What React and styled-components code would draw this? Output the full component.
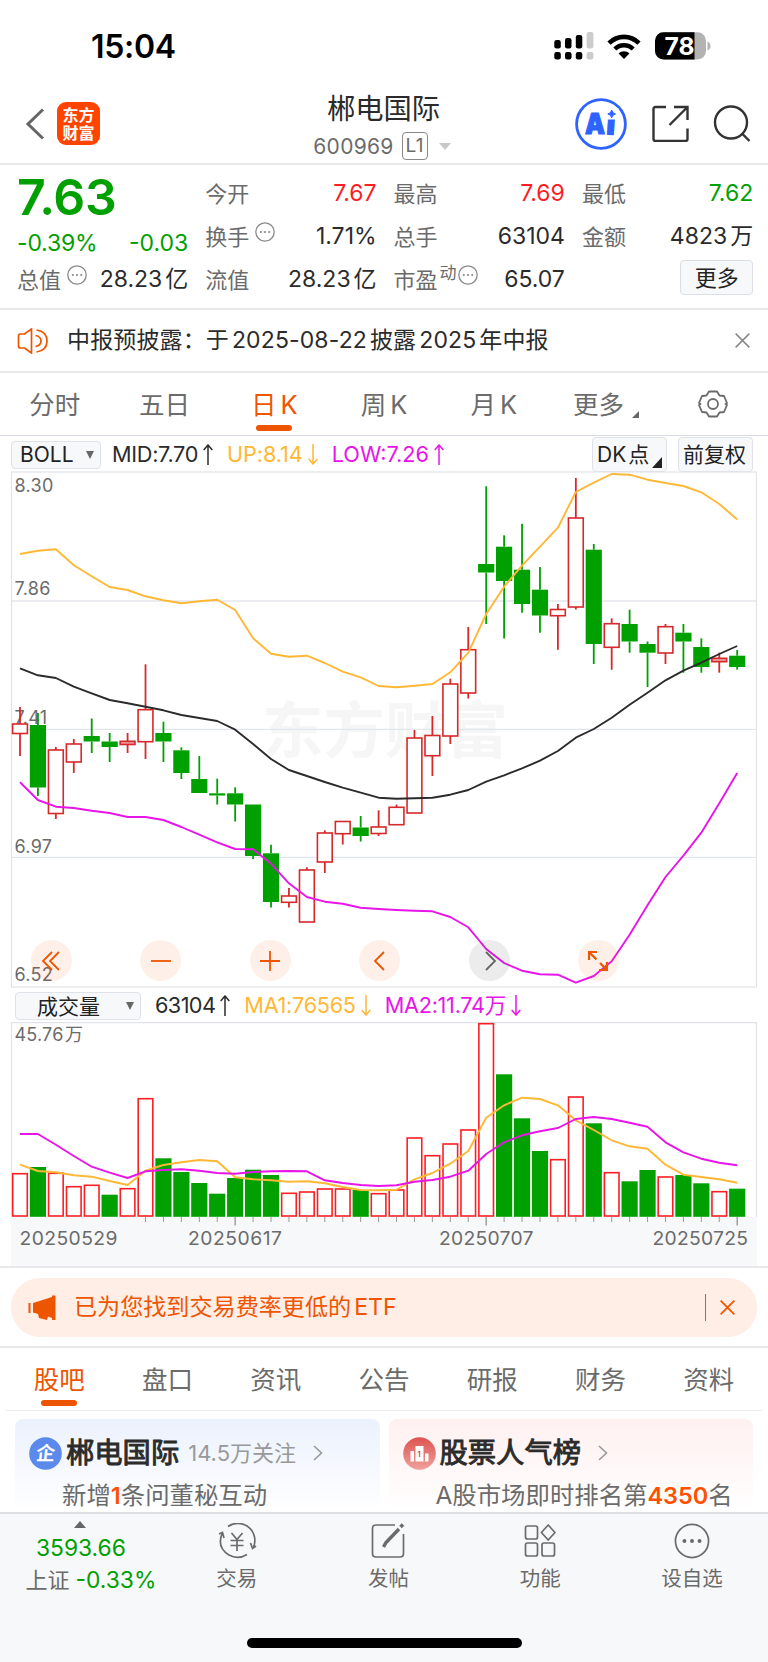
import styled, { createGlobalStyle } from "styled-components";

const GREEN = "#00a000";
const RED = "#fb1f24";
const CANDLE_RED = "#d6292b";
const ORANGE = "#ee5500";
const YELLOW = "#ffb836";
const PINK = "#e815e8";

const GlobalStyle = createGlobalStyle`
    * {
        box-sizing: border-box;
    }

    body {
        margin: 0;
        background: #fff;
        color: #2b2b2b;
        font-family: Inter, "Noto Sans CJK SC", sans-serif;
        line-height: 1;
        white-space: nowrap;
    }

    svg {
        display: block;
        flex: none;
    }
`

const Page = styled.div`
    width: 768px;
    height: 1662px;
    overflow: hidden;
    display: flex;
    flex-direction: column;
`

const StatusBar = styled.div`
    height: 93px;
    padding: 0 57.5px 0 91px;
    display: flex;
    align-items: center;
    justify-content: space-between;
`

const Clock = styled.span`
    font-size: 32px;
    font-weight: 600;
    letter-spacing: -0.3px;
    color: #000;
    margin-top: 1px;
`

const StatusIcons = styled.div`
    display: flex;
    align-items: center;
    gap: 13.5px;
    margin-top: -1px;
`

const Header = styled.header`
    height: 72px;
    padding: 0 17px 0 25px;
    display: grid;
    grid-template-columns: 1fr auto 1fr;
    align-items: center;
    border-bottom: 2px solid #e9e9ec;
`

const HeaderSide = styled.div`
    display: flex;
    align-items: center;
    justify-content: ${props => props.$end ? "flex-end" : "flex-start"};
    gap: ${props => props.$gap}px;
    padding-bottom: 9px;
`

const Logo = styled.div`
    width: 43px;
    height: 43px;
    border-radius: 9px;
    background: #ff4400;
    color: #fff;
    display: flex;
    flex-direction: column;
    align-items: center;
    justify-content: center;
    font-size: 16px;
    font-weight: 700;
    line-height: 18px;
`

const Title = styled.div`
    display: flex;
    flex-direction: column;
    align-items: center;
    align-self: start;
    gap: 5px;
    margin-right: 9px;
`

const StockName = styled.div`
    font-size: 28.3px;
    line-height: 32px;
`

const StockCode = styled.div`
    display: flex;
    align-items: center;
    font-size: 21px;
    letter-spacing: 0.3px;
    color: #6b6b6b;
    height: 32px;
    margin-right: 3px;
`

const Level = styled.span`
    width: 26px;
    height: 28px;
    margin: 0 11px 0 8px;
    border: 1.5px solid #888;
    border-radius: 4px;
    font-size: 19px;
    line-height: 26px;
    text-align: center;
`

const Caret = styled.i`
    width: 0;
    height: 0;
    border: ${props => props.$size}px solid transparent;
    border-top: ${props => props.$tall}px solid ${props => props.$color};
    border-bottom: 0;
`

const Quote = styled.section`
    height: 145px;
    padding: 7px 14px 0 17px;
    display: grid;
    grid-template-columns: repeat(4, 171.3px);
    column-gap: 17px;
    border-bottom: 2px solid #e9e9ec;
`

const QuoteColumn = styled.div`
    display: flex;
    flex-direction: column;
`

const QuoteRow = styled.div`
    height: ${props => props.$height || 43}px;
    display: flex;
    align-items: center;
    justify-content: ${props => props.$end ? "flex-end" : "space-between"};
    font-size: 23px;
`

const Price = styled.div`
    height: 49px;
    font-size: 50px;
    font-weight: 600;
    letter-spacing: -0.4px;
    line-height: 50px;
    color: ${GREEN};
`

const Label = styled.span`
    display: flex;
    align-items: center;
    font-size: 22px;
    color: #6b6b6b;

    sup {
        font-size: 17px;
        line-height: 17px;
        margin: -12px 0 0 2px;
    }

    svg {
        margin: -9px 0 0 ${props => props.$tight ? 1 : 6}px;
    }
`

const Value = styled.span`
    letter-spacing: ${props => props.$ls || 0}px;
    color: ${props => props.$color || "#2b2b2b"};
`

// small gap between latin digits and the han character next to them
const Gap = styled.span`
    margin-left: ${props => props.$size || 3}px;
`

const MoreButton = styled.button`
    width: 73px;
    height: 35px;
    padding: 0;
    border: 1.5px solid #dcdee6;
    border-radius: 4px;
    background: #f7f8fa;
    font: 22px/30px Inter, "Noto Sans CJK SC", sans-serif;
    color: #222;
    margin-top: -4px;
`

const Notice = styled.div`
    height: 63px;
    padding: 0 18px 0 17px;
    display: flex;
    align-items: center;
    border-bottom: 2px solid #e9e9ec;
    font-size: 23px;
`

const NoticeText = styled.span`
    flex: 1;
    margin-left: 18px;
    letter-spacing: 0.13px;
`

const Tabs = styled.nav`
    height: 63px;
    margin: ${props => props.$inset ? "0 5px" : 0};
    display: grid;
    grid-template-columns: repeat(7, 1fr);
    border-bottom: 1.5px solid ${props => props.$inset ? "#ececef" : "#d9dbe2"};
`

const Tab = styled.a`
    display: flex;
    flex-direction: column;
    align-items: center;
    font-size: 25.5px;
    line-height: 63px;
    color: ${props => props.$active ? ORANGE : "#6b6b6b"};

    &::after {
        content: "";
        display: ${props => props.$active ? "block" : "none"};
        width: 36px;
        height: 6px;
        border-radius: 3px;
        background: ${ORANGE};
        margin-top: -11px;
    }
`

const TabMore = styled.span`
    display: flex;
    align-items: center;
    gap: 8px;
    padding-left: 5px;

    i {
        margin-top: 19px;
    }
`

const Corner = styled.i`
    width: 0;
    height: 0;
    border-left: ${props => props.$size}px solid transparent;
    border-bottom: ${props => props.$size * 1.1}px solid ${props => props.$color};
`

const IndicatorBar = styled.div`
    height: ${props => props.$height}px;
    padding: 2px 15px 0 ${props => props.$left}px;
    display: flex;
    align-items: center;
    font-size: 21.7px;
`

const Selector = styled.div`
    width: ${props => props.$width}px;
    height: 28px;
    padding: 0 6px 0 ${props => props.$pad}px;
    margin-right: ${props => props.$gap}px;
    display: flex;
    align-items: center;
    justify-content: space-between;
    border: 1.5px solid #e0e2e9;
    border-radius: 4px;
    background: #f7f8fa;
    font-size: 21px;
    color: #222;
`

const Reading = styled.span`
    display: flex;
    align-items: center;
    gap: 5px;
    margin-right: 14px;
    letter-spacing: ${props => props.$ls || 0}px;
    color: ${props => props.$color};
`

const ToolBox = styled.div`
    position: relative;
    width: 75px;
    height: 35px;
    margin: -1px 0 0 ${props => props.$push ? "auto" : "11px"};
    border: 1.5px solid #e0e2e9;
    border-radius: 4px;
    background: #f7f8fa;
    color: #222;
    line-height: 34px;
    font-size: 21px;
    padding-left: 4px;

    i {
        position: absolute;
        right: 4px;
        bottom: 3px;
    }
`

const ChartPanel = styled.div`
    position: relative;
    height: ${props => props.$height}px;
`

const Controls = styled.div`
    position: absolute;
    left: 31px;
    top: 469px;
    display: flex;
    gap: 68.4px;
`

const Round = styled.button`
    width: 41px;
    height: 41px;
    border: 0;
    padding: 0;
    border-radius: 50%;
    display: grid;
    place-items: center;
    background: ${props => props.$grey ? "rgba(40, 40, 40, 0.09)" : "rgba(240, 90, 10, 0.09)"};
    color: ${props => props.$grey ? "#666" : ORANGE};
`

const BannerWrap = styled.div`
    height: 82px;
    padding: 10px 11px 0;
    border-top: 2px solid #e9e9ec;
    border-bottom: 2px solid #e9e9ec;
`

const Banner = styled.div`
    height: 59px;
    padding: 0 22px 0 17px;
    border-radius: 29px;
    background: #feeee6;
    color: ${ORANGE};
    display: flex;
    align-items: center;
    font-size: 23.1px;
`

const BannerText = styled.span`
    flex: 1;
    margin-left: 17px;
`

const BannerDivider = styled.i`
    width: 1.5px;
    height: 27px;
    margin-right: 14px;
    background: ${ORANGE};
`

const Cards = styled.div`
    height: 101px;
    padding: 8px 15px 0;
    display: grid;
    grid-template-columns: 1fr 1fr;
    gap: 9px;
`

const Card = styled.div`
    border-radius: 8px;
    padding: 17px 0 0 14px;
    background: linear-gradient(${props => props.$tint}, #fff);
`

const CardTitle = styled.div`
    height: 34px;
    display: flex;
    align-items: center;

    small {
        font-size: 22px;
        color: #999;
        margin-right: 17px;
    }
`

const CardName = styled.b`
    font-size: 28.3px;
    font-weight: 400;
    -webkit-text-stroke: 0.9px #2b2b2b;
    margin: 0 ${props => props.$after}px 0 4px;
`

const CardText = styled.div`
    margin: 13px 0 0 33px;
    font-size: 24.4px;
    color: #6b6b6b;

    em {
        font-style: normal;
        font-weight: 600;
        font-size: 23.5px;
        color: #ff5000;
    }
`

const BottomBar = styled.footer`
    height: 150px;
    padding-left: 9px;
    border-top: 2px solid #dedfe3;
    background: #f7f8fa;
    display: grid;
    grid-template-columns: repeat(5, 1fr);
    grid-template-rows: 124px auto;
`

const IndexCell = styled.div`
    display: flex;
    flex-direction: column;
    align-items: center;
    padding-top: 7px;
    color: ${GREEN};
    font-size: 22.8px;
`

const IndexRow = styled.div`
    display: flex;
    align-items: center;
    gap: 6px;
    height: 31.5px;
    margin-right: ${props => props.$shift}px;
`

const UpCaret = styled.i`
    border: 6px solid transparent;
    border-top: 0;
    border-bottom: 7px solid #666;
    margin: 0 9px 5px 0;
`

const NavItem = styled.a`
    display: flex;
    flex-direction: column;
    align-items: center;
    padding-top: 9px;
    gap: 7.5px;
    font-size: 20.5px;
    line-height: 24px;
    color: #6b6b6b;
`

const HomeIndicator = styled.div`
    grid-column: 1 / -1;
    justify-self: center;
    width: 275px;
    height: 10px;
    margin-left: -9px;
    border-radius: 5px;
    background: #000;
`

// day: [up, high, body top, body bottom, low, volume top, volume colour flipped]
const days = [
    [1, 707, 724, 733.5, 756, 1173.7], [0, 713, 725, 787.5, 796, 1167], [1, 747, 750, 813.5, 819, 1173.3],
    [1, 739, 744, 762, 773, 1186.7], [0, 718.5, 736, 741.5, 753, 1185.3, 1], [0, 733, 741.5, 747, 762, 1194.7],
    [1, 733, 741.3, 744.5, 753, 1188.7], [1, 664.3, 709.7, 741.7, 759, 1098.7], [0, 721.7, 733, 741.5, 762, 1158.3],
    [0, 747.3, 750.3, 773, 779, 1172], [0, 756, 779, 793, 793, 1183], [0, 778.7, 793.3, 795.5, 804.5, 1193.7],
    [0, 787.3, 793.3, 804.5, 821.5, 1178], [0, 804.5, 804.5, 856, 859, 1169.7], [0, 844.7, 853.3, 902, 907.5, 1175],
    [1, 888, 896, 902.3, 907.5, 1193.3], [1, 867.3, 870, 922, 922, 1192], [1, 830.3, 833, 862, 873, 1189],
    [1, 821.5, 821.5, 833.7, 844.5, 1189], [0, 816, 827.5, 836, 841.5, 1190], [1, 810.3, 827, 833.5, 836, 1193.7],
    [1, 804.5, 807.3, 824.7, 824.7, 1190], [1, 730, 738, 813, 813, 1138], [1, 716, 735.5, 755.7, 776, 1155.7],
    [1, 678.7, 684, 736, 744, 1144], [1, 627, 649.7, 693, 698.5, 1130], [0, 486.3, 564, 572.5, 624, 1023.7, 1],
    [0, 535.3, 546.7, 581, 638.5, 1074.3], [0, 523.7, 569.7, 604, 612.7, 1118.3], [0, 567, 589.7, 615.5, 632.7, 1151],
    [1, 604, 609.5, 615.7, 649.7, 1159.7], [1, 478, 518, 607, 609.5, 1097], [0, 544, 549.7, 644, 664, 1123.3],
    [1, 618.3, 623.7, 647.3, 669.7, 1172.7], [0, 609.7, 624, 641.5, 652.7, 1181.3], [0, 641.5, 644, 652.7, 687, 1170],
    [1, 624, 626.7, 653, 664, 1177], [0, 624, 632.7, 641.5, 672.7, 1175], [0, 638.3, 647, 667, 672.7, 1183.3],
    [1, 652.7, 658.3, 661.7, 672.7, 1191.7], [0, 650, 655.7, 667, 669.7, 1188.7],
];

const boll = {
    up: [554, 550.7, 549.3, 565.3, 576.3, 587, 590, 596.3, 600.3, 603.3, 601.3, 599.7, 610, 638.3, 653.7, 656.7, 655.7, 663, 671.7, 677.3, 686, 687.3, 685.7, 684, 672.3, 652.7, 614, 586.7, 565.7, 546.7, 527.7, 492, 482.7, 474, 474.7, 479.7, 483, 486, 492.3, 504, 519.5],
    mid: [668.3, 675.3, 678, 686.7, 693.3, 700, 703.3, 706.7, 710.3, 715, 718, 721, 729.7, 744, 759, 770, 776, 782, 787.7, 792.7, 797.7, 798.7, 798.3, 797.7, 794.7, 790, 781.7, 775.3, 768.3, 760.7, 751, 737.7, 729, 717.7, 704.7, 692.7, 680.3, 670.7, 662.7, 654, 646],
    low: [782.3, 800, 806.7, 808, 810.7, 813, 817, 817, 820, 827, 834.7, 842.3, 849, 849.3, 863.7, 883.3, 897, 901.7, 903.7, 907.7, 909, 910, 910.7, 911.3, 917, 927.3, 949, 963, 970.7, 974.3, 974.7, 982.7, 976, 961.3, 934.7, 905.3, 877, 855.7, 832.7, 803.3, 773],
};

const volumeMa = {
    ma1: [1164.7, 1171, 1172.3, 1175.3, 1176.7, 1181, 1185, 1170.7, 1165, 1162.3, 1160, 1161.3, 1177.3, 1179.3, 1180.3, 1181.7, 1181.3, 1183.3, 1187, 1190, 1190.3, 1189.7, 1179.3, 1173, 1163.7, 1151, 1117.7, 1105.3, 1097.7, 1099, 1105.3, 1120.3, 1130, 1140.3, 1146.3, 1148.7, 1164.7, 1174.7, 1177, 1179.3, 1182.7],
    ma2: [1134, 1134, 1144.7, 1156, 1166.7, 1172.7, 1178, 1171.3, 1170, 1169.3, 1170.7, 1173, 1173.7, 1172, 1171.3, 1171, 1171.3, 1180.3, 1183, 1185, 1186, 1185.3, 1181.7, 1180, 1176.7, 1170.7, 1154, 1142.3, 1135.3, 1131.3, 1128, 1119, 1117, 1119, 1122.7, 1126.7, 1142.3, 1152.3, 1158.7, 1162.7, 1165.3],
};

const x = i => 20 + i * 17.93;
const toPoints = values => values.map((v, i) => `${x(i).toFixed(1)},${v}`).join(" ");

function Line({ values, color }) {
    return <polyline points={toPoints(values)} fill="none" stroke={color} strokeWidth="1.9" strokeLinejoin="round" />
}

function Candle({ index, day }) {
    const [up, high, top, bottom, low] = day;
    const cx = x(index);
    const color = up ? CANDLE_RED : GREEN;
    const thin = bottom - top < 4;

    return <g stroke={color} strokeWidth="1.8">
        <line x1={cx} x2={cx} y1={high} y2={top} />
        <line x1={cx} x2={cx} y1={bottom} y2={low} />
        {up
            ? <rect x={cx - 7.4} y={top} width="14.8" height={bottom - top} fill={thin ? "#eb9a9b" : "#fff"} strokeWidth="1.6" />
            : <rect x={cx - 8.1} y={top} width="16.2" height={bottom - top} fill={color} stroke="none" />}
    </g>
}

function PriceChart() {
    const labels = [["8.30", 491.5], ["7.86", 594.8], ["7.41", 724], ["6.97", 852.5], ["6.52", 981]];

    return <svg width="768" height="517" viewBox="0 471 768 517">
        <text x="262" y="753" fontSize="61.5" fontWeight="700" fill="#f6f6f7">东方财富</text>
        <rect x="11.5" y="472" width="745" height="515" fill="none" stroke="#e1e3ea" strokeWidth="1.2" />
        {[601, 729.3, 857.3].map(y => <line key={y} x1="12" x2="756" y1={y} y2={y} stroke="#e4e6ee" strokeWidth="1.3" />)}
        <g fontSize="18" fill="#6b6b6b" letterSpacing="0.3">
            {labels.map(([text, y]) => <text key={text} x="14.5" y={y}>{text}</text>)}
        </g>
        {days.map((day, i) => <Candle key={i} index={i} day={day} />)}
        <Line values={boll.up} color={YELLOW} />
        <Line values={boll.mid} color="#2b2b2b" />
        <Line values={boll.low} color={PINK} />
    </svg>
}

function VolumeChart() {
    return <svg width="768" height="244" viewBox="0 1022 768 244">
        <rect x="11" y="1217" width="746" height="49" fill="#f7f8fa" />
        <path d="M11.5 1217V1022.6H756.5V1217" fill="none" stroke="#e1e3ea" strokeWidth="1.2" />
        <text x="14.5" y="1040.5" fontSize="18" fill="#6b6b6b" letterSpacing="0.2">45.76<tspan dx="1.5">万</tspan></text>
        {days.map((day, i) => {
            const up = day[6] ? !day[0] : day[0];
            const top = day[5];
            return up
                ? <rect key={i} x={x(i) - 7.3} y={top} width="14.6" height={1216 - top} fill="#fff" stroke={RED} strokeWidth="1.6" />
                : <rect key={i} x={x(i) - 8.1} y={top} width="16.2" height={1216.8 - top} fill={GREEN} />
        })}
        {days.map((day, i) => {
            if (i < 7) return null;
            const long = i === 12 || i === 26 || i === 40;
            return <line key={i} x1={x(i)} x2={x(i)} y1="1217" y2={long ? 1225.5 : 1222} stroke="#999" strokeWidth={long ? 1.4 : 1} />
        })}
        <Line values={volumeMa.ma1} color={YELLOW} />
        <Line values={volumeMa.ma2} color={PINK} />
        <g fontSize="19.3" fill="#6b6b6b">
            <text x="19.5" y="1245" textLength="98">20250529</text>
            <text x="188" y="1245" textLength="94">20250617</text>
            <text x="439" y="1245" textLength="94.5">20250707</text>
            <text x="652.5" y="1245" textLength="95.5">20250725</text>
        </g>
    </svg>
}

function Signal() {
    return <svg width="40" height="28" viewBox="0 0 40 28">
        <g fill="#000">
            <rect x="0.3" y="8" width="6.5" height="8.5" rx="2.2" />
            <rect x="11" y="6" width="6.5" height="10.5" rx="2.2" />
            <rect x="21.8" y="3" width="6.5" height="13.5" rx="2.2" />
            <rect x="0.3" y="20" width="6.5" height="7.5" rx="2.2" />
            <rect x="11" y="20" width="6.5" height="7.5" rx="2.2" />
            <rect x="21.8" y="20" width="6.5" height="7.5" rx="2.2" />
        </g>
        <g fill="#ccc">
            <rect x="32.6" y="0" width="6.8" height="16.5" rx="2.2" />
            <rect x="32.6" y="20" width="6.8" height="7.5" rx="2.2" />
        </g>
    </svg>
}

function Wifi() {
    return <svg width="34" height="25" viewBox="0 0 34 25" fill="none" stroke="#000">
        <path d="M2 9.2C10.4 0.8 23.6 0.8 32 9.2" strokeWidth="4.6" />
        <path d="M7.8 15C13 9.9 21 9.9 26.2 15" strokeWidth="4.4" />
        <path d="M17 25L11.6 19.5C14.6 16.6 19.4 16.6 22.4 19.5Z" fill="#000" stroke="none" />
    </svg>
}

function Battery() {
    return <svg width="56" height="28" viewBox="0 0 56 28">
        <rect x="0" y="0.3" width="51" height="27.2" rx="8.5" fill="#b3b3b3" />
        <path d="M8.5 0.3H39.5V27.5H8.5A8.5 8.5 0 0 1 0 19V8.8A8.5 8.5 0 0 1 8.5 0.3Z" fill="#000" />
        <path d="M52.5 9.5C56.5 10.5 56.5 17.5 52.5 18.5Z" fill="#b3b3b3" />
        <text x="9.5" y="22.5" fontSize="24" fontWeight="700" fill="#fff" textLength="30" lengthAdjust="spacingAndGlyphs">78</text>
    </svg>
}

function AiBadge() {
    return <svg width="52" height="52" viewBox="0 0 52 52">
        <circle cx="26" cy="26" r="24.4" fill="#fff" stroke="#2f63ff" strokeWidth="2.8" />
        <g fontSize="29" fontWeight="900" fill="#2f63ff" stroke="#2f63ff" strokeWidth="1.2" strokeLinejoin="round">
            <text x="10" y="35.5" textLength="20" lengthAdjust="spacingAndGlyphs">A</text>
            <text x="31.5" y="36.5" transform="rotate(4 36 30)">i</text>
        </g>
        <rect x="30.5" y="10" width="13" height="11.5" fill="#fff" />
        <path d="M36.7 12Q37.3 15.3 40.6 15.9Q37.3 16.5 36.7 19.8Q36.1 16.5 32.8 15.9Q36.1 15.3 36.7 12Z" fill="#2f63ff" stroke="#2f63ff" />
    </svg>
}

function Dots({ size = 20, stroke = 1.3, color = "#8a8a8a" }) {
    return <svg width={size} height={size} viewBox="0 0 20 20" fill="none" stroke={color} strokeWidth={stroke}>
        <circle cx="10" cy="10" r="9.2" />
        <g fill={color} stroke="none">
            <circle cx="5.8" cy="10" r="1.1" />
            <circle cx="10" cy="10" r="1.1" />
            <circle cx="14.2" cy="10" r="1.1" />
        </g>
    </svg>
}

function Arrow({ down }) {
    return <svg width="10" height="21" viewBox="0 0 10 21" fill="none" stroke="currentColor" strokeWidth="1.5">
        {down ? <path d="M5 0V20M0.7 15L5 20L9.3 15" /> : <path d="M5 21V1M0.7 6L5 1L9.3 6" />}
    </svg>
}

function Cross({ size, color, width = 1.6 }) {
    return <svg width={size} height={size} viewBox="0 0 14 14" stroke={color} strokeWidth={width}>
        <path d="M0.6 0.6L13.4 13.4M13.4 0.6L0.6 13.4" />
    </svg>
}

function Chevron() {
    return <svg width="10" height="16" viewBox="0 0 10 16" fill="none" stroke="#999" strokeWidth="1.6">
        <path d="M1 1L8.5 8L1 15" />
    </svg>
}

const controls = [
    "M10 1L1 10L10 19M17 1L8 10L17 19",
    "M0 10H20",
    "M0 10H20M10 0V20",
    "M14 1L5 10L14 19",
    "M7 1L16 10L7 19",
    "M1 9V1H9M1 1L8.5 8.5M12 12L19 19M19 11V19H11",
];

function App() {
    return <>
        <GlobalStyle />
        <Page>
            <StatusBar>
                <Clock>15:04</Clock>
                <StatusIcons>
                    <Signal />
                    <Wifi />
                    <Battery />
                </StatusIcons>
            </StatusBar>

            <Header>
                <HeaderSide $gap={12}>
                    <svg width="20" height="32" viewBox="0 0 20 32" fill="none" stroke="#666" strokeWidth="3">
                        <path d="M18 1.5L3 16L18 30.5" />
                    </svg>
                    <Logo>
                        <span>东方</span>
                        <span>财富</span>
                    </Logo>
                </HeaderSide>
                <Title>
                    <StockName>郴电国际</StockName>
                    <StockCode>
                        600969
                        <Level>L1</Level>
                        <Caret $size={6.5} $tall={7} $color="#c8c8c8" />
                    </StockCode>
                </Title>
                <HeaderSide $end $gap={24.5}>
                    <AiBadge />
                    <svg width="37" height="37" viewBox="0 0 37 37" fill="none" stroke="#333" strokeWidth="2.4">
                        <path d="M14 2H3.5Q1.5 2 1.5 4V34Q1.5 36 3.5 36H33.5Q35.5 36 35.5 34V23.5M22 2H35.5V15M35.5 2L17.5 20" />
                    </svg>
                    <svg width="38" height="37" viewBox="0 0 38 37" fill="none" stroke="#333" strokeWidth="2.4">
                        <circle cx="18" cy="17.5" r="16" />
                        <path d="M29 28.5L36.5 36" />
                    </svg>
                </HeaderSide>
            </Header>

            <Quote>
                <QuoteColumn>
                    <Price>7.63</Price>
                    <QuoteRow $height={44}>
                        <Value $color={GREEN} $ls={-0.2}>-0.39%</Value>
                        <Value $color={GREEN}>-0.03</Value>
                    </QuoteRow>
                    <QuoteRow $height={29}>
                        <Label>总值<Dots /></Label>
                        <Value>28.23<Gap>亿</Gap></Value>
                    </QuoteRow>
                </QuoteColumn>
                <QuoteColumn>
                    <QuoteRow><Label>今开</Label><Value $color={RED}>7.67</Value></QuoteRow>
                    <QuoteRow><Label>换手<Dots /></Label><Value>1.71%</Value></QuoteRow>
                    <QuoteRow><Label>流值</Label><Value>28.23<Gap>亿</Gap></Value></QuoteRow>
                </QuoteColumn>
                <QuoteColumn>
                    <QuoteRow><Label>最高</Label><Value $color={RED}>7.69</Value></QuoteRow>
                    <QuoteRow><Label>总手</Label><Value>63104</Value></QuoteRow>
                    <QuoteRow><Label $tight>市盈<sup>动</sup><Dots /></Label><Value>65.07</Value></QuoteRow>
                </QuoteColumn>
                <QuoteColumn>
                    <QuoteRow><Label>最低</Label><Value $color={GREEN}>7.62</Value></QuoteRow>
                    <QuoteRow><Label>金额</Label><Value>4823<Gap>万</Gap></Value></QuoteRow>
                    <QuoteRow $end><MoreButton>更多</MoreButton></QuoteRow>
                </QuoteColumn>
            </Quote>

            <Notice>
                <svg width="32" height="26" viewBox="0 0 32 26" fill="none" stroke={ORANGE} strokeWidth="1.7">
                    <path d="M1.5 8Q1.5 6 3.5 6H7.5L14.5 1V25L7.5 20H3.5Q1.5 20 1.5 18Z" />
                    <path d="M18.5 7.5Q24 8.5 24 13T18.5 18.5M19.5 2Q30 3.5 30 13T19.5 24" />
                </svg>
                <NoticeText>
                    中报预披露：于<Gap>2025-08-22</Gap><Gap>披露</Gap><Gap>2025</Gap><Gap>年中报</Gap>
                </NoticeText>
                <Cross size={15} color="#888" width={1.4} />
            </Notice>

            <Tabs>
                <Tab>分时</Tab>
                <Tab>五日</Tab>
                <Tab $active><span>日<Gap $size={4}>K</Gap></span></Tab>
                <Tab><span>周<Gap $size={4}>K</Gap></span></Tab>
                <Tab><span>月<Gap $size={4}>K</Gap></span></Tab>
                <Tab>
                    <TabMore>更多<Corner $size={7} $color="#666" /></TabMore>
                </Tab>
                <Tab>
                    <svg width="30" height="62" viewBox="0 -17 30 62" fill="none" stroke="#6b6b6b" strokeWidth="1.8">
                        <path d="M11 1.5H19L21.5 5.5L26 6L29 13L27.5 14L29 15L26 22L21.5 22.5L19 26.5H11L8.5 22.5L4 22L1 15L2.5 14L1 13L4 6L8.5 5.5Z" strokeLinejoin="round" />
                        <circle cx="15" cy="14" r="5" />
                    </svg>
                </Tab>
            </Tabs>

            <IndicatorBar $left={11} $height={35}>
                <Selector $width={90} $pad={8} $gap={11}>BOLL<Caret $size={4.5} $tall={8} $color="#666" /></Selector>
                <Reading $color="#2b2b2b" $ls={-0.3}>MID:7.70<Arrow /></Reading>
                <Reading $color={YELLOW} $ls={-0.1}>UP:8.14<Arrow down /></Reading>
                <Reading $color={PINK}>LOW:7.26<Arrow /></Reading>
                <ToolBox $push>DK<Gap $size={2}>点</Gap><Corner $size={10} $color="#222" /></ToolBox>
                <ToolBox>前复权</ToolBox>
            </IndicatorBar>

            <ChartPanel $height={517}>
                <PriceChart />
                <Controls>
                    {controls.map((d, i) => <Round key={d} $grey={i === 4}>
                        <svg width="20" height="20" viewBox="0 0 20 20" fill="none" stroke="currentColor" strokeWidth={i === 5 ? 2.2 : 1.8}>
                            <path d={d} />
                        </svg>
                    </Round>)}
                </Controls>
            </ChartPanel>

            <IndicatorBar $left={15} $height={34}>
                <Selector $width={126} $pad={21} $gap={14}>成交量<Caret $size={4.5} $tall={8} $color="#666" /></Selector>
                <Reading $color="#2b2b2b" $ls={-0.6}>63104<Arrow /></Reading>
                <Reading $color={YELLOW} $ls={-0.3}>MA1:76565<Arrow down /></Reading>
                <Reading $color={PINK} $ls={-0.3}>MA2:11.74万<Arrow down /></Reading>
            </IndicatorBar>

            <ChartPanel $height={244}>
                <VolumeChart />
            </ChartPanel>

            <BannerWrap>
                <Banner>
                    <svg width="29" height="26" viewBox="0 0 29 26" fill={ORANGE}>
                        <path d="M0.5 8H2.5V18H0.5ZM5 8L24 2V0.5H27.5V25H24V23L20 21.5L19 25L11 23L10 19L5 17.5Z" />
                    </svg>
                    <BannerText>已为您找到交易费率更低的<Gap>ETF</Gap></BannerText>
                    <BannerDivider />
                    <Cross size={15} color={ORANGE} />
                </Banner>
            </BannerWrap>

            <Tabs $inset>
                <Tab $active>股吧</Tab>
                <Tab>盘口</Tab>
                <Tab>资讯</Tab>
                <Tab>公告</Tab>
                <Tab>研报</Tab>
                <Tab>财务</Tab>
                <Tab>资料</Tab>
            </Tabs>

            <Cards>
                <Card $tint="#ebf1fd">
                    <CardTitle>
                        <svg width="33" height="33" viewBox="0 0 33 33">
                            <circle cx="16.5" cy="16.5" r="16.3" fill="#5b8aec" />
                            <text x="7" y="23.5" fontSize="19" fontWeight="700" fill="#fff" transform="skewX(-6) translate(2 0)">企</text>
                        </svg>
                        <CardName $after={9}>郴电国际</CardName>
                        <small>14.5万关注</small>
                        <Chevron />
                    </CardTitle>
                    <CardText>新增<em>1</em>条问董秘互动</CardText>
                </Card>
                <Card $tint="#fff0f0">
                    <CardTitle>
                        <svg width="33" height="33" viewBox="0 0 33 33">
                            <defs>
                                <linearGradient id="rank" x2="0" y2="1">
                                    <stop offset="0" stopColor="#dc5450" />
                                    <stop offset="1" stopColor="#f0a09c" />
                                </linearGradient>
                            </defs>
                            <circle cx="16.5" cy="16.5" r="16.3" fill="url(#rank)" />
                            <path d="M7.5 14H11V24.5H7.5ZM12.5 9H20.5V24.5H12.5ZM22 16.5H25.5V24.5H22Z" fill="#fff" />
                            <text x="14.3" y="20" fontSize="8" fontWeight="700" fill="#dc5450">1</text>
                        </svg>
                        <CardName $after={17}>股票人气榜</CardName>
                        <Chevron />
                    </CardTitle>
                    <CardText>A股市场即时排名第<em>4350</em>名</CardText>
                </Card>
            </Cards>

            <BottomBar>
                <IndexCell>
                    <UpCaret />
                    <IndexRow $shift={8}>3593.66</IndexRow>
                    <IndexRow $shift={-12}><Label>上证</Label>-0.33%</IndexRow>
                </IndexCell>
                <NavItem>
                    <svg width="40" height="36" viewBox="0 0 40 36" fill="none" stroke="#6b6b6b" strokeWidth="1.7">
                        <path d="M11 3.5A17 17 0 0 1 36.5 24M2 11L5.5 9.5L7 15M5.5 9.5Q-1 24 12 32Q21 37 30 31.5M39 23L35.5 25.5L33.5 20" />
                        <path d="M14.5 10L20 16.5L25.5 10M20 16.5V28M13.5 17.5H26.5M13.5 22.5H26.5" />
                    </svg>
                    交易
                </NavItem>
                <NavItem>
                    <svg width="34" height="36" viewBox="0 0 34 36" fill="none" stroke="#6b6b6b" strokeWidth="1.7">
                        <path d="M24 2H5Q1.5 2 1.5 5.5V30.5Q1.5 34 5 34H29Q32.5 34 32.5 30.5V11" />
                        <path d="M32 1.5L29.5 4" strokeWidth="3.5" />
                        <path d="M28 6L15 19.5L12.5 24" strokeWidth="3.5" />
                    </svg>
                    发帖
                </NavItem>
                <NavItem>
                    <svg width="32" height="36" viewBox="0 0 32 36" fill="none" stroke="#6b6b6b" strokeWidth="1.7">
                        <rect x="1.5" y="3" width="12" height="13" rx="2" />
                        <rect x="1.5" y="20" width="12" height="13" rx="2" />
                        <rect x="18" y="20" width="12.5" height="13" rx="2" />
                        <path d="M24.2 2L31 9.5L24.2 17L17.4 9.5Z" strokeLinejoin="round" />
                    </svg>
                    功能
                </NavItem>
                <NavItem>
                    <Dots size={36} stroke={0.95} color="#6b6b6b" />
                    设自选
                </NavItem>
                <HomeIndicator />
            </BottomBar>
        </Page>
    </>
}

export default App
